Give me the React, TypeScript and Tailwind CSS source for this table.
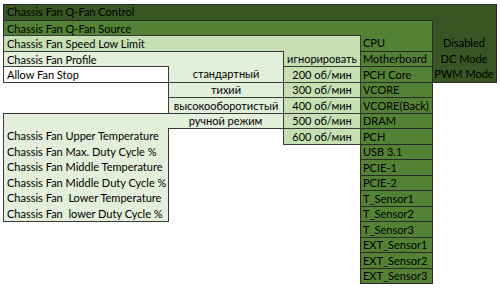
const sources = [
  "CPU",
  "Motherboard",
  "PCH Core",
  "VCORE",
  "VCORE(Back)",
  "DRAM",
  "PCH",
  "USB 3.1",
  "PCIE-1",
  "PCIE-2",
  "T_Sensor1",
  "T_Sensor2",
  "T_Sensor3",
  "EXT_Sensor1",
  "EXT_Sensor2",
  "EXT_Sensor3",
];

const limits = ["игнорировать", "200 об/мин", "300 об/мин", "400 об/мин", "500 об/мин", "600 об/мин"];

const profiles = ["стандартный", "тихий", "высокооборотистый", "ручной режим"];

const temps = [
  "Chassis Fan Upper Temperature",
  "Chassis Fan Max. Duty Cycle %",
  "Chassis Fan Middle Temperature",
  "Chassis Fan Middle Duty Cycle %",
  "Chassis Fan  Lower Temperature",
  "Chassis Fan  lower Duty Cycle %",
];

const modes = ["Disabled", "DC Mode", "PWM Mode"];

export default function App() {
  return (
    <div className="w-[500px] h-[288px] overflow-hidden bg-white pt-[4px] pl-[3px] font-['Lato','Liberation_Sans',sans-serif] text-[11px] leading-[15px] text-black">
      <div className="grid grid-cols-[165px_115px_77px_72px_64px] grid-rows-[repeat(18,15.5px)]">
        {/* Q-Fan Control */}
        <div className="col-start-1 col-end-6 row-start-1 row-end-6 -mr-px -mb-px border border-[#2a2a2a] bg-[#375623]" />
        <div className="col-start-1 col-end-5 row-start-1 row-end-2 flex items-center pl-[4px]">
          Chassis Fan Q-Fan Control
        </div>
        <div className="col-start-5 col-end-6 row-start-3 row-end-6 flex flex-col">
          {modes.map((m) => (
            <div key={m} className="h-[15.5px] flex items-center justify-center">
              {m}
            </div>
          ))}
        </div>

        {/* Q-Fan Source */}
        <div className="col-start-1 col-end-5 row-start-2 row-end-3 -mr-px -mb-px border-t border-l border-r border-[#2a2a2a] bg-[#548235] flex items-center pl-[3px]">
          Chassis Fan Q-Fan Source
        </div>
        <div className="col-start-4 col-end-5 row-start-3 row-end-19 -mr-px -mb-px border-l border-r border-b border-[#2a2a2a] bg-[#548235] flex flex-col">
          {sources.map((s, i) => (
            <div
              key={s}
              className={
                i === 0
                  ? "h-[15.5px] flex items-center pl-[2px]"
                  : "h-[15.5px] flex items-center pl-[2px] border-t border-[#2a2a2a]"
              }
            >
              {s}
            </div>
          ))}
        </div>

        {/* Speed Low Limit */}
        <div className="col-start-1 col-end-4 row-start-3 row-end-4 -mr-px -mb-px border-t border-l border-r border-[#3a3a3a] bg-[#c6e0b4] flex items-center pl-[3px]">
          Chassis Fan Speed Low Limit
        </div>
        <div className="col-start-3 col-end-4 row-start-4 row-end-10 -mr-px -mb-px border-l border-r border-b border-[#3a3a3a] bg-[#c6e0b4] flex flex-col">
          {limits.map((l, i) => (
            <div
              key={l}
              className={
                i === 0
                  ? "h-[15.5px] flex items-center justify-center"
                  : "h-[15.5px] flex items-center justify-center border-t border-[#3a3a3a]"
              }
            >
              {l}
            </div>
          ))}
        </div>

        {/* Profile */}
        <div className="col-start-1 col-end-3 row-start-4 row-end-5 -mr-px -mb-px border-t border-l border-r border-[#3a3a3a] bg-[#e2efda] flex items-center pl-[3px]">
          Chassis Fan Profile
        </div>

        {/* temperature block */}
        <div className="col-start-1 col-end-2 row-start-8 row-end-15 -mr-px -mb-px border border-[#3a3a3a] bg-[#e2efda] flex flex-col">
          <div className="h-[14.5px]" />
          {temps.map((t) => (
            <div key={t} className="h-[15.5px] flex items-center pl-[3px] whitespace-pre">
              {t}
            </div>
          ))}
        </div>

        <div className="col-start-2 col-end-3 row-start-5 row-end-9 -mr-px -mb-px border-r border-b border-[#3a3a3a] bg-[#e2efda] flex flex-col">
          {profiles.map((p, i) => (
            <div
              key={p}
              className={
                i === 0
                  ? "h-[15.5px] flex items-center justify-center border-l border-[#3a3a3a]"
                  : i === 3
                    ? "h-[15.5px] flex items-center justify-center border-t border-[#3a3a3a]"
                    : "h-[15.5px] flex items-center justify-center border-t border-l border-[#3a3a3a]"
              }
            >
              {p}
            </div>
          ))}
        </div>

        {/* Allow Fan Stop */}
        <div className="col-start-1 col-end-2 row-start-5 row-end-6 -mr-px -mb-px border border-[#3a3a3a] bg-white flex items-center pl-[3px]">
          Allow Fan Stop
        </div>
      </div>
    </div>
  );
}
